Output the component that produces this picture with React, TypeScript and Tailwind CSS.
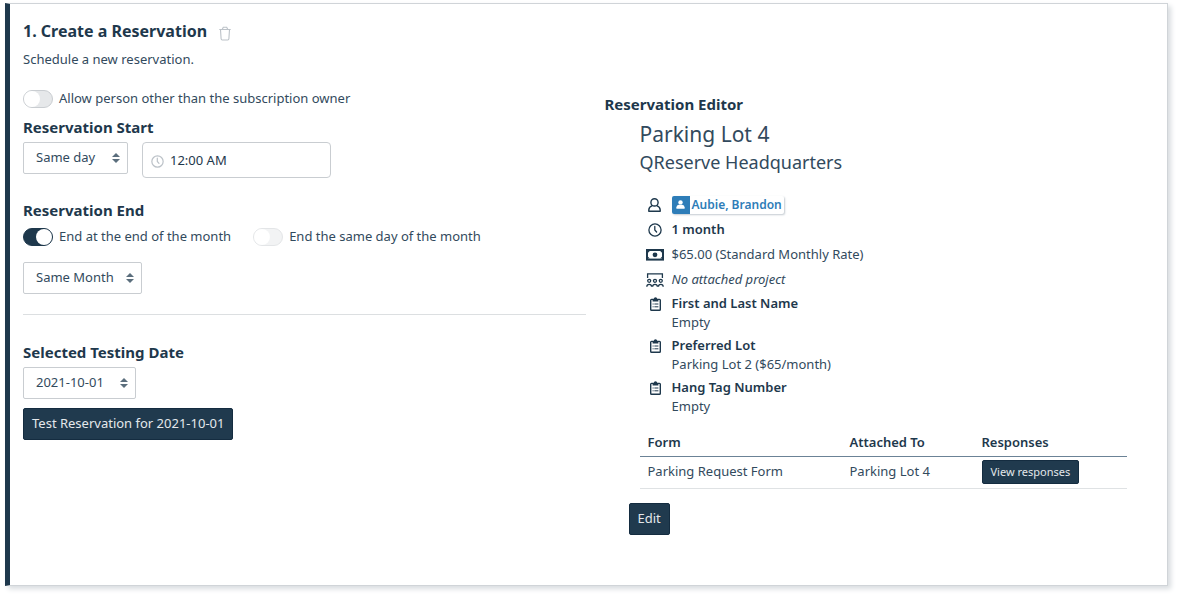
import { useState, type ReactNode } from "react";

function TrashIcon() {
  return (
    <svg width="12" height="15" viewBox="0 0 12 15" fill="none" stroke="currentColor" strokeWidth="1.1" aria-hidden="true">
      <path d="M0.3 3.5h11.4M3.3 3.3l1-2h3.4l1 2M1.5 3.5l0.6 9.2q0.1 1.3 1.1 1.3h5.6q1 0 1.1-1.3l0.6-9.2" />
    </svg>
  );
}

function ClockIcon({ size }: { size: number }) {
  return (
    <svg width={size} height={size} viewBox="0 0 14 14" fill="none" stroke="currentColor" strokeWidth="1.3" strokeLinecap="round" className="shrink-0" aria-hidden="true">
      <circle cx="7" cy="7" r="6.1" />
      <path d="M6.8 3.4V7l1.8 2" />
    </svg>
  );
}

function UserIcon() {
  return (
    <svg width="13" height="14" viewBox="0 0 13 14" fill="none" stroke="currentColor" strokeWidth="1.4" strokeLinejoin="round" aria-hidden="true">
      <circle cx="6.5" cy="4.4" r="3.6" />
      <path d="M4.2 7.6Q0.8 9 0.8 11.9v1.3h11.4v-1.3Q12.2 9 8.8 7.6" />
    </svg>
  );
}

function MoneyIcon() {
  return (
    <svg width="18" height="12" viewBox="0 0 18 12" fill="none" stroke="currentColor" aria-hidden="true">
      <rect x="1" y="1" width="16" height="9.6" strokeWidth="2" />
      <circle cx="9" cy="5.8" r="2.4" fill="currentColor" stroke="none" />
      <path d="M2 2h1.8L2 3.8zM16 2h-1.8L16 3.8zM2 9.6h1.8L2 7.8zM16 9.6h-1.8L16 7.8z" fill="currentColor" stroke="none" />
    </svg>
  );
}

function ProjectIcon() {
  return (
    <svg width="18" height="14" viewBox="0 0 18 14" fill="none" stroke="currentColor" strokeWidth="1.3" aria-hidden="true">
      <path d="M1.6 5V0.8h14.8V5" />
      <circle cx="3.2" cy="7.8" r="1.5" />
      <circle cx="9" cy="7.8" r="1.5" />
      <circle cx="14.8" cy="7.8" r="1.5" />
      <path d="M0.8 13.8q0-2.4 2.4-2.4t2.4 2.4M6.6 13.8q0-2.4 2.4-2.4t2.4 2.4M12.4 13.8q0-2.4 2.4-2.4t2.4 2.4" />
    </svg>
  );
}

function ClipboardIcon() {
  return (
    <svg width="11" height="14" viewBox="0 0 11 14" fill="none" stroke="currentColor" aria-hidden="true">
      <rect x="0.7" y="2.4" width="9.6" height="10.8" rx="0.8" strokeWidth="1.4" />
      <path d="M2.6 4.6V2h1.2a1.7 1.7 0 0 1 3.4 0h1.2v2.6z" fill="currentColor" stroke="none" />
      <path d="M2.6 7h1M4.4 7h4M2.6 9.8h1M4.4 9.8h4" strokeWidth="1" />
    </svg>
  );
}

function PersonSolidIcon() {
  return (
    <svg width="9" height="9" viewBox="0 0 9 9" fill="currentColor" aria-hidden="true">
      <circle cx="4.5" cy="2.4" r="2.2" />
      <path d="M0.4 8.8V7.2Q0.4 5 3 4.8h3Q8.6 5 8.6 7.2v1.6z" />
    </svg>
  );
}

function SortIcon() {
  return (
    <svg width="8" height="10" viewBox="0 0 8 10" fill="currentColor" aria-hidden="true">
      <path d="M0 4L4 0l4 4zM0 6h8L4 10z" />
    </svg>
  );
}

function Select({ label, options, width }: { label: string; options: string[]; width: string }) {
  return (
    <div className={`relative ${width}`}>
      <select
        aria-label={label}
        className="block h-8 w-full appearance-none rounded-xs border border-[#c9cdd1] bg-white pl-3 pr-5 text-[13px] text-[#324a5d] focus:outline-2 focus:outline-[#2e7db8]"
      >
        {options.map((o) => (
          <option key={o}>{o}</option>
        ))}
      </select>
      <span className="pointer-events-none absolute inset-y-0 right-2 flex items-center text-[#5b6e7d]">
        <SortIcon />
      </span>
    </div>
  );
}

function Toggle({ label, initial = false, faded = false }: { label: string; initial?: boolean; faded?: boolean }) {
  const [on, setOn] = useState(initial);
  return (
    <label className="flex h-5 items-center gap-1.5">
      <input
        type="checkbox"
        role="switch"
        checked={on}
        onChange={(e) => setOn(e.target.checked)}
        className={`h-[18px] w-[30px] shrink-0 appearance-none rounded-full border border-[#c9cdd1] bg-[#e6e8ea] before:block before:size-4 before:rounded-full before:bg-white checked:border-[#1e384c] checked:bg-[#1e384c] checked:before:translate-x-3 ${faded ? "opacity-50" : ""}`}
      />
      {label}
    </label>
  );
}

function SectionTitle({ children }: { children: ReactNode }) {
  return <h2 className="text-[15px] leading-5 font-bold text-[#1e384c]">{children}</h2>;
}

function Row({ icon, children }: { icon: ReactNode; children: ReactNode }) {
  return (
    <li className="flex h-[25px] items-center">
      <span className="flex w-8 items-center justify-center pr-0.5 text-[#1e384c]">{icon}</span>
      {children}
    </li>
  );
}

function Field({ name, value }: { name: string; value: string }) {
  return (
    <li className="mb-1 flex leading-[19px]">
      <span className="flex h-5 w-8 shrink-0 items-center justify-center text-[#1e384c]">
        <ClipboardIcon />
      </span>
      <div>
        <p className="font-semibold text-[#1e384c]">{name}</p>
        <p>{value}</p>
      </div>
    </li>
  );
}

export default function App() {
  return (
    <main className="bg-white pt-[3px] pr-3 pb-2 pl-[5px] font-['Noto_Sans',sans-serif] text-[13px] text-[#324a5d]">
      <section className="border border-l-5 border-[#d0d4d8] border-l-[#1e384c] bg-white pt-[15px] pb-[50px] pl-[13px] shadow-[3px_3px_5px_#d9dde0]">
        <div className="flex h-6 items-center gap-3">
          <h1 className="text-base leading-6 font-bold text-[#1e384c]">1. Create a Reservation</h1>
          <button type="button" aria-label="Delete reservation step" className="pt-1 text-[#bcc2c8]">
            <TrashIcon />
          </button>
        </div>
        <p className="mt-1.5 leading-5">Schedule a new reservation.</p>

        <div className="mt-5 grid grid-cols-2 gap-[19px]">
          <div>
            <Toggle label="Allow person other than the subscription owner" />
            <div className="mt-2">
              <SectionTitle>Reservation Start</SectionTitle>
            </div>
            <div className="mt-[5px] flex items-start gap-3.5">
              <Select label="Start day" options={["Same day", "Next day"]} width="w-[105px]" />
              <label className="flex h-9 w-[189px] items-center gap-1.5 rounded-sm border border-[#c9cdd1] px-2 pt-0.5 text-[#bcc2c8]">
                <ClockIcon size={13} />
                <input
                  type="text"
                  aria-label="Start time"
                  defaultValue="12:00 AM"
                  className="w-full min-w-0 bg-transparent text-[#1e384c] focus:outline-none"
                />
              </label>
            </div>

            <div className="mt-[22px]">
              <SectionTitle>Reservation End</SectionTitle>
            </div>
            <div className="mt-[7px] flex gap-[22px]">
              <Toggle label="End at the end of the month" initial />
              <Toggle label="End the same day of the month" faded />
            </div>
            <div className="mt-[15px]">
              <Select label="End month" options={["Same Month", "Next Month"]} width="w-[119px]" />
            </div>

            <hr className="mt-5 border-[#dcdfe1]" />

            <div className="mt-[27px]">
              <SectionTitle>Selected Testing Date</SectionTitle>
            </div>
            <div className="mt-[5px]">
              <Select label="Testing date" options={["2021-10-01"]} width="w-[113px]" />
            </div>
            <button
              type="button"
              className="mt-[9px] h-8 rounded-xs border border-[#142c40] bg-[#203a4e] px-2 text-[#e4e8eb]"
            >
              Test Reservation for 2021-10-01
            </button>
          </div>

          <div className="pt-[5px] pr-10">
            <SectionTitle>Reservation Editor</SectionTitle>
            <div className="mt-1.5 pl-[35px]">
              <h3 className="text-[21px] leading-7">Parking Lot 4</h3>
              <h4 className="mt-0.5 text-lg leading-6">QReserve Headquarters</h4>
              <ul className="mt-[18px]">
                <Row icon={<UserIcon />}>
                  <a href="#" className="flex h-[18px] items-center rounded-xs pr-0.5 font-semibold text-[#2e7db8] shadow-[1px_1px_2px_#c4cbd1]">
                    <span className="mr-0.5 flex size-[18px] items-center justify-center rounded-l-xs bg-[#2e7db8] text-white">
                      <PersonSolidIcon />
                    </span>
                    <span className="text-xs">Aubie, Brandon</span>
                  </a>
                </Row>
                <Row icon={<ClockIcon size={14} />}>
                  <span className="font-semibold text-[#1e384c]">1 month</span>
                </Row>
                <Row icon={<MoneyIcon />}>$65.00 (Standard Monthly Rate)</Row>
                <Row icon={<ProjectIcon />}>
                  <em>No attached project</em>
                </Row>
              </ul>
              <ul className="mt-0.5">
                <Field name="First and Last Name" value="Empty" />
                <Field name="Preferred Lot" value="Parking Lot 2 ($65/month)" />
                <Field name="Hang Tag Number" value="Empty" />
              </ul>
              <table className="mt-[13px] w-full table-fixed border-collapse text-left">
                <thead>
                  <tr className="h-[27px] border-b border-[#6b8296] text-[#1e384c]">
                    <th className="w-[202px] px-2 font-semibold">Form</th>
                    <th className="w-[132px] px-2 font-semibold">Attached To</th>
                    <th className="px-2 font-semibold">Responses</th>
                  </tr>
                </thead>
                <tbody>
                  <tr className="h-8 border-b border-[#dfe2e4]">
                    <td className="px-2">Parking Request Form</td>
                    <td className="px-2">Parking Lot 4</td>
                    <td className="px-2">
                      <button
                        type="button"
                        className="block h-6 rounded-xs border border-[#142c40] bg-[#203a4e] px-2 text-[11px] text-[#e4e8eb]"
                      >
                        View responses
                      </button>
                    </td>
                  </tr>
                </tbody>
              </table>
            </div>
            <button
              type="button"
              className="mt-3.5 ml-6 h-8 rounded-xs border border-[#142c40] bg-[#203a4e] px-2 text-[#e4e8eb]"
            >
              Edit
            </button>
          </div>
        </div>
      </section>
    </main>
  );
}
